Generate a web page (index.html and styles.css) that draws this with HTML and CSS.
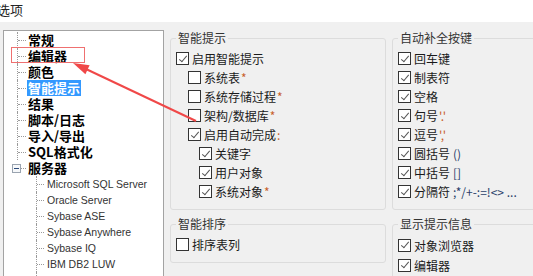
FILE: index.html
```html
<!DOCTYPE html>
<html>
<head>
  <meta charset="UTF-8">
  <title>选项</title>
  <link rel="stylesheet" href="styles.css">
</head>
<body>
  <div class="titlebar"><span class="title">选项</span></div>
  <div class="main">
    <!-- 左侧树 -->
    <div class="tree">
      <div class="row"><span class="guide"><i></i></span><span class="label">常规</span></div>
      <div class="row"><span class="guide"><i></i></span><span class="label">编辑器</span></div>
      <div class="row"><span class="guide"><i></i></span><span class="label">颜色</span></div>
      <div class="row"><span class="guide"><i></i></span><span class="label selected">智能提示</span></div>
      <div class="row"><span class="guide"><i></i></span><span class="label">结果</span></div>
      <div class="row"><span class="guide"><i></i></span><span class="label">脚本/日志</span></div>
      <div class="row"><span class="guide"><i></i></span><span class="label">导入/导出</span></div>
      <div class="row"><span class="guide"><i></i></span><span class="label">SQL格式化</span></div>
      <div class="row"><span class="guide exp"><b class="minus"></b><i></i></span><span class="label">服务器</span></div>
      <div class="row child"><span class="guide"><i></i></span><span class="label">Microsoft SQL Server</span></div>
      <div class="row child"><span class="guide"><i></i></span><span class="label">Oracle Server</span></div>
      <div class="row child"><span class="guide"><i></i></span><span class="label">Sybase ASE</span></div>
      <div class="row child"><span class="guide"><i></i></span><span class="label">Sybase Anywhere</span></div>
      <div class="row child"><span class="guide"><i></i></span><span class="label">Sybase IQ</span></div>
      <div class="row child"><span class="guide"><i></i></span><span class="label">IBM DB2 LUW</span></div>
      <div class="row child"><span class="guide"><i></i></span><span class="label">IBM DB2 z/OS</span></div>
    </div>

    <div class="panels">
      <div class="col left-col">
        <fieldset>
          <legend>智能提示</legend>
          <div class="opt"><span class="cb on"></span>启用智能提示</div>
          <div class="opt l1"><span class="cb"></span>系统表<em>*</em></div>
          <div class="opt l1"><span class="cb"></span>系统存储过程<em>*</em></div>
          <div class="opt l1"><span class="cb"></span>架构/数据库<em>*</em></div>
          <div class="opt l1"><span class="cb on"></span>启用自动完成<em>:</em></div>
          <div class="opt l2"><span class="cb on"></span>关键字</div>
          <div class="opt l2"><span class="cb on"></span>用户对象</div>
          <div class="opt l2"><span class="cb on"></span>系统对象<em>*</em></div>
        </fieldset>
        <fieldset class="lower">
          <legend>智能排序</legend>
          <div class="opt"><span class="cb"></span>排序表列</div>
        </fieldset>
      </div>
      <div class="col right-col">
        <fieldset>
          <legend>自动补全按键</legend>
          <div class="opt"><span class="cb on"></span>回车键</div>
          <div class="opt"><span class="cb on"></span>制表符</div>
          <div class="opt"><span class="cb on"></span>空格</div>
          <div class="opt"><span class="cb on"></span>句号<em>'.'</em></div>
          <div class="opt"><span class="cb on"></span>逗号<em>','</em></div>
          <div class="opt"><span class="cb on"></span>圆括号 <span class="sym">()</span></div>
          <div class="opt"><span class="cb on"></span>中括号 <span class="sym">[]</span></div>
          <div class="opt"><span class="cb on"></span>分隔符 <span class="sym">;*/+-:=!&lt;&gt; ...</span></div>
        </fieldset>
        <fieldset class="lower open">
          <legend>显示提示信息</legend>
          <div class="opt"><span class="cb on"></span>对象浏览器</div>
          <div class="opt"><span class="cb on"></span>编辑器</div>
        </fieldset>
      </div>
    </div>
  </div>

  <!-- 标注 -->
  <div class="mark"></div>
  <svg class="arrow" width="533" height="276" viewBox="0 0 533 276">
    <line x1="196" y1="121" x2="87" y2="69.5" stroke="#f04848" stroke-width="2" />
    <polygon points="73,63 89.6,65.3 85.4,74.3" fill="#f04848" />
  </svg>
</body>
</html>
```

FILE: styles.css
```css
html, body {
  margin: 0;
  width: 533px;
  height: 276px;
  overflow: hidden;
}
body {
  font-family: "Noto Sans CJK SC", "Liberation Sans", sans-serif;
  font-size: 12px;
  color: #1a1a1a;
  background-color: #f0f0f0;
  position: relative;
}
.titlebar {
  height: 22px;
  background-color: #fff;
  line-height: 20px;
  font-size: 13px;
  color: #222;
}
.title {
  margin-left: -3px;
}
.main {
  display: flex;
  align-items: flex-start;
  padding-top: 8px;
  height: 246px;
}

/* 树 */
.tree {
  margin-left: 3px;
  width: 159px;
  height: 300px;
  flex-shrink: 0;
  background-color: #fff;
  border: 1px solid #a3a3a3;
  padding-top: 1px;
  box-sizing: content-box;
}
.row {
  display: flex;
  align-items: center;
  height: 16px;
}
.guide {
  display: flex;
  align-items: center;
  height: 16px;
  width: 9px;
  margin-left: 13px;
  border-left: 1px dotted #9a9a9a;
}
.guide i {
  display: block;
  width: 8px;
  border-top: 1px dotted #9a9a9a;
}
.guide.exp {
  border-left: none;
  margin-left: 8px;
  width: 15px;
}
.guide.exp i {
  width: 5px;
}
.minus {
  display: flex;
  align-items: center;
  justify-content: center;
  width: 7px;
  height: 7px;
  border: 1px solid #9aa4b0;
  background-color: #f6f8fa;
}
.minus::after {
  content: "";
  width: 5px;
  border-top: 1px solid #2c4a7a;
}
.label {
  font-weight: bold;
  font-size: 13px;
  line-height: 16px;
  padding: 0 1px;
  color: #000;
  white-space: nowrap;
}
.label.selected {
  background-color: #3399ff;
  color: #fff;
}
.child .guide {
  margin-left: 32px;
}
.child .guide i {
  width: 7px;
}
.child .label {
  font-family: "Liberation Sans", sans-serif;
  font-weight: normal;
  font-size: 10.5px;
  color: #333;
}

/* 右侧设置 */
.panels {
  display: flex;
  gap: 6px;
  margin-left: 6px;
}
.left-col {
  width: 216px;
  flex-shrink: 0;
}
.right-col {
  width: 170px;
  flex-shrink: 0;
}
fieldset {
  margin: 0;
  min-width: 0;
  border: 1px solid #dcdcdc;
  border-radius: 3px;
  padding: 3px 5px 8px;
}
fieldset.lower {
  margin-top: 6px;
}
fieldset.open {
  padding-bottom: 30px;
}
fieldset.open .opt {
  height: 20px;
}
legend {
  padding: 0 2px;
  line-height: 16px;
  color: #333;
}
.opt {
  display: flex;
  align-items: center;
  gap: 3px;
  height: 19px;
  white-space: nowrap;
}
.opt.l1 {
  padding-left: 12px;
}
.opt.l2 {
  padding-left: 23px;
}
.opt em {
  font-style: normal;
  color: #c8602c;
  margin-left: -2px;
}
.opt .sym {
  color: #2a3f6a;
}
.cb {
  display: flex;
  align-items: center;
  justify-content: center;
  width: 11px;
  height: 11px;
  border: 1px solid #333;
  background-color: #fff;
  flex-shrink: 0;
}
.cb.on::after {
  content: "";
  width: 3px;
  height: 7px;
  border-right: 1px solid #555;
  border-bottom: 1px solid #555;
  transform: translate(0, -1px) rotate(40deg);
}

/* 标注 */
.mark {
  position: absolute;
  left: 11px;
  top: 47px;
  width: 72px;
  height: 14px;
  border: 1px solid #ef7070;
}
.arrow {
  position: absolute;
  left: 0;
  top: 0;
  pointer-events: none;
}
```
